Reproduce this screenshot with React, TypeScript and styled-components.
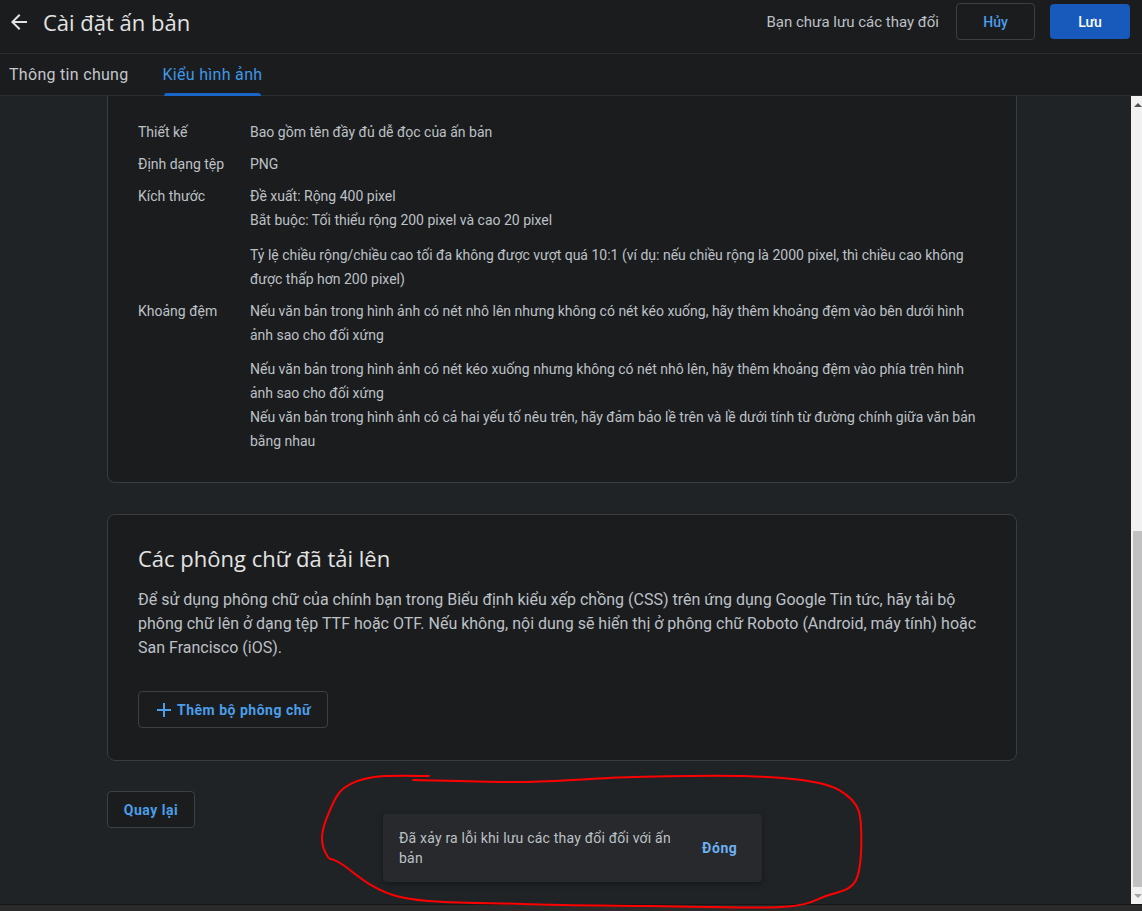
import React from "react";
import styled, { createGlobalStyle } from "styled-components";

const Global = createGlobalStyle`
  html, body { margin: 0; padding: 0; background: #1f2326; overflow: hidden; }
  * { box-sizing: border-box; }
`;

const SANS = `Roboto, "Noto Sans", "Liberation Sans", sans-serif`;
const DISPLAY = `"Open Sans", Roboto, "Liberation Sans", sans-serif`;

const Page = styled.div`
  position: relative;
  width: 1142px;
  height: 911px;
  display: flex;
  flex-direction: column;
  background: #1f2326;
  font-family: ${SANS};
  color: #bdc1c6;
  overflow: hidden;
`;

const Header = styled.header`
  height: 54px;
  flex: none;
  display: flex;
  align-items: center;
  padding: 3px 12px 13px 7px;
  background: #1b1c1e;
  border-bottom: 1px solid #2c2d30;
`;

const IconButton = styled.button`
  width: 24px;
  height: 24px;
  padding: 0;
  border: 0;
  background: none;
  color: #e3e3e3;
  display: flex;
  align-items: center;
  justify-content: center;
`;

const Title = styled.h1`
  margin: 0 0 0 12px;
  font-family: ${DISPLAY};
  font-weight: 400;
  font-size: 22px;
  color: #e3e3e3;
`;

const Spacer = styled.div`
  flex: 1;
`;

const Unsaved = styled.span`
  font-size: 15px;
  color: #bdc1c6;
  margin-right: 17px;
`;

const OutlineButton = styled.button<{ $w?: number; $h?: number }>`
  height: ${(p) => p.$h ?? 37}px;
  width: ${(p) => (p.$w ? `${p.$w}px` : "auto")};
  padding: 0 16px;
  border: 1px solid #3c4043;
  border-radius: 4px;
  background: #1b1c1e;
  color: #4a9eea;
  font-family: ${SANS};
  font-weight: 500;
  font-size: 14px;
  display: inline-flex;
  align-items: center;
  justify-content: center;
  gap: 1px;
`;

const PrimaryButton = styled.button`
  width: 80px;
  height: 35px;
  margin-left: 15px;
  border: 0;
  border-radius: 4px;
  background: #185abc;
  color: #ffffff;
  font-family: ${SANS};
  font-weight: 500;
  font-size: 14px;
`;

const Tabs = styled.nav`
  height: 42px;
  flex: none;
  display: flex;
  align-items: stretch;
  gap: 34px;
  padding-left: 9px;
  background: #1b1c1e;
  border-bottom: 1px solid #2c2d30;
`;

const Tab = styled.div<{ $active?: boolean }>`
  position: relative;
  display: flex;
  align-items: center;
  font-size: 16px;
  letter-spacing: 0.3px;
  color: ${(p) => (p.$active ? "#3f97e6" : "#c4c7cc")};
  &::after {
    content: "";
    display: ${(p) => (p.$active ? "block" : "none")};
    position: absolute;
    left: 1px;
    right: 1px;
    bottom: -1px;
    height: 3px;
    border-radius: 3px 3px 0 0;
    background: #1a66c8;
  }
`;

const Body = styled.div`
  flex: 1;
  display: flex;
  min-height: 0;
`;

const Scroll = styled.main`
  flex: 1;
  overflow: hidden;
`;

const Column = styled.div`
  width: 910px;
  margin-left: 107px;
  display: flex;
  flex-direction: column;
  align-items: flex-start;
`;

const Card = styled.section<{ $clipped?: boolean }>`
  width: 100%;
  background: #1b1c1e;
  border: 1px solid #3a3c3f;
  border-top: ${(p) => (p.$clipped ? "none" : "1px solid #3a3c3f")};
  border-radius: ${(p) => (p.$clipped ? "0 0 8px 8px" : "8px")};
  padding: ${(p) => (p.$clipped ? "24px 30px 29px" : "29px 30px 32px")};
  margin-top: ${(p) => (p.$clipped ? 0 : 31)}px;
`;

const SpecList = styled.dl`
  margin: 0;
  display: grid;
  grid-template-columns: 112px 1fr;
  row-gap: 8px;
  font-size: 14px;
  line-height: 24px;
`;

const SpecLabel = styled.dt`
  color: #bdc1c6;
`;

const SpecValue = styled.dd`
  margin: 0;
  color: #bdc1c6;
  padding-right: 6px;
`;

const Para = styled.p<{ $gap?: number }>`
  margin: ${(p) => p.$gap ?? 0}px 0 0;
`;

const CardTitle = styled.h2`
  margin: 0;
  font-family: ${DISPLAY};
  font-weight: 400;
  font-size: 22px;
  line-height: 28px;
  color: #e3e3e3;
`;

const CardText = styled.p`
  margin: 16px 0 0;
  font-size: 16px;
  line-height: 24px;
  color: #bdc1c6;
`;

const AddButton = styled(OutlineButton)`
  margin-top: 31px;
  padding: 0 16px 0 13px;
  font-weight: 700;
  letter-spacing: 0.5px;
`;

const BackLink = styled(OutlineButton)`
  margin-top: 30px;
  width: 88px;
  padding: 0;
  font-weight: 700;
  letter-spacing: 0.5px;
`;

const Scrollbar = styled.div`
  width: 11px;
  flex: none;
  background: #f1f1f1;
  display: flex;
  flex-direction: column;
  align-items: flex-end;
`;

const ScrollArrow = styled.div<{ $down?: boolean }>`
  width: 9px;
  height: 17px;
  flex: none;
  display: flex;
  align-items: center;
  justify-content: center;
  &::before {
    content: "";
    width: 0;
    height: 0;
    border-left: 4px solid transparent;
    border-right: 4px solid transparent;
    ${(p) =>
      p.$down
        ? "border-top: 4px solid #a3a3a3;"
        : "border-bottom: 4px solid #505050;"}
  }
`;

const Track = styled.div`
  flex: 1;
  width: 9px;
  display: flex;
  flex-direction: column;
  justify-content: flex-end;
`;

const Thumb = styled.div`
  height: 356px;
  background: #c1c1c1;
`;

const BottomBar = styled.div`
  height: 7px;
  flex: none;
  background: #2b2b2b;
  border-top: 1px solid #151617;
`;

const Toast = styled.div`
  position: absolute;
  left: 383px;
  bottom: 29px;
  width: 379px;
  height: 68px;
  display: flex;
  align-items: center;
  padding: 0 16px;
  background: #27292c;
  border-radius: 4px;
  box-shadow: 0 2px 6px rgba(0, 0, 0, 0.35);
`;

const ToastMessage = styled.div`
  width: 287px;
  font-size: 14px;
  line-height: 20px;
  letter-spacing: 0.2px;
  color: #bdc1c6;
`;

const ToastAction = styled.button`
  margin-left: 8px;
  padding: 0 8px;
  border: 0;
  background: none;
  color: #6cb0f2;
  font-family: ${SANS};
  font-weight: 700;
  font-size: 14px;
  letter-spacing: 0.6px;
`;

const Annotation = styled.svg`
  position: absolute;
  left: 0;
  top: 0;
  pointer-events: none;
`;

const scribble: [number, number][] = [
  [429, 776], [374, 777], [344, 788], [330, 810], [322, 837], [328, 857],
  [340, 863], [400, 897], [522, 904], [650, 906], [781, 907], [826, 896],
  [856, 880], [861, 827], [852, 800], [819, 783], [744, 776], [633, 777],
  [522, 782], [413, 780],
];

function smoothPath(pts: [number, number][]) {
  let d = `M${pts[0][0]} ${pts[0][1]}`;
  for (let i = 0; i < pts.length - 1; i++) {
    const p0 = pts[i - 1] ?? pts[i];
    const p1 = pts[i];
    const p2 = pts[i + 1];
    const p3 = pts[i + 2] ?? p2;
    const c1x = p1[0] + (p2[0] - p0[0]) / 6;
    const c1y = p1[1] + (p2[1] - p0[1]) / 6;
    const c2x = p2[0] - (p3[0] - p1[0]) / 6;
    const c2y = p2[1] - (p3[1] - p1[1]) / 6;
    d += ` C${c1x.toFixed(1)} ${c1y.toFixed(1)} ${c2x.toFixed(1)} ${c2y.toFixed(1)} ${p2[0]} ${p2[1]}`;
  }
  return d;
}

const ArrowBack = () => (
  <svg width="24" height="24" viewBox="0 0 24 24" fill="currentColor">
    <path d="M20 11H7.83l5.59-5.59L12 4l-8 8 8 8 1.41-1.41L7.83 13H20v-2z" />
  </svg>
);

const PlusIcon = () => (
  <svg width="24" height="24" viewBox="0 0 24 24" fill="currentColor">
    <path d="M19 13h-6v6h-2v-6H5v-2h6V5h2v6h6v2z" />
  </svg>
);

export default function App() {
  return (
    <Page>
      <Global />
      <Header>
        <IconButton aria-label="Quay lại">
          <ArrowBack />
        </IconButton>
        <Title>Cài đặt ấn bản</Title>
        <Spacer />
        <Unsaved>Bạn chưa lưu các thay đổi</Unsaved>
        <OutlineButton $w={79}>Hủy</OutlineButton>
        <PrimaryButton>Lưu</PrimaryButton>
      </Header>
      <Tabs>
        <Tab>Thông tin chung</Tab>
        <Tab $active>Kiểu hình ảnh</Tab>
      </Tabs>
      <Body>
        <Scroll>
          <Column>
            <Card $clipped>
              <SpecList>
                <SpecLabel>Thiết kế</SpecLabel>
                <SpecValue>Bao gồm tên đầy đủ dễ đọc của ấn bản</SpecValue>
                <SpecLabel>Định dạng tệp</SpecLabel>
                <SpecValue>PNG</SpecValue>
                <SpecLabel>Kích thước</SpecLabel>
                <SpecValue>
                  <Para>
                    Đề xuất: Rộng 400 pixel
                    <br />
                    Bắt buộc: Tối thiểu rộng 200 pixel và cao 20 pixel
                  </Para>
                  <Para $gap={11}>
                    Tỷ lệ chiều rộng/chiều cao tối đa không được vượt quá 10:1 (ví dụ: nếu chiều rộng là 2000 pixel, thì chiều cao không được thấp hơn 200 pixel)
                  </Para>
                </SpecValue>
                <SpecLabel>Khoảng đệm</SpecLabel>
                <SpecValue>
                  <Para>
                    Nếu văn bản trong hình ảnh có nét nhô lên nhưng không có nét kéo xuống, hãy thêm khoảng đệm vào bên dưới hình ảnh sao cho đối xứng
                  </Para>
                  <Para $gap={10}>
                    Nếu văn bản trong hình ảnh có nét kéo xuống nhưng không có nét nhô lên, hãy thêm khoảng đệm vào phía trên hình ảnh sao cho đối xứng
                    <br />
                    Nếu văn bản trong hình ảnh có cả hai yếu tố nêu trên, hãy đảm bảo lề trên và lề dưới tính từ đường chính giữa văn bản bằng nhau
                  </Para>
                </SpecValue>
              </SpecList>
            </Card>
            <Card>
              <CardTitle>Các phông chữ đã tải lên</CardTitle>
              <CardText>
                Để sử dụng phông chữ của chính bạn trong Biểu định kiểu xếp chồng (CSS) trên ứng dụng Google Tin tức, hãy tải bộ phông chữ lên ở dạng tệp TTF hoặc OTF. Nếu không, nội dung sẽ hiển thị ở phông chữ Roboto (Android, máy tính) hoặc San Francisco (iOS).
              </CardText>
              <AddButton>
                <PlusIcon />
                Thêm bộ phông chữ
              </AddButton>
            </Card>
            <BackLink>Quay lại</BackLink>
          </Column>
        </Scroll>
        <Scrollbar>
          <ScrollArrow />
          <Track>
            <Thumb />
          </Track>
          <ScrollArrow $down />
        </Scrollbar>
      </Body>
      <BottomBar />
      <Toast role="status">
        <ToastMessage>Đã xảy ra lỗi khi lưu các thay đổi đối với ấn bản</ToastMessage>
        <ToastAction>Đóng</ToastAction>
      </Toast>
      <Annotation width="1142" height="911" viewBox="0 0 1142 911">
        <path d={smoothPath(scribble)} fill="none" stroke="#ff0000" strokeWidth="2" strokeLinecap="round" strokeLinejoin="round" />
      </Annotation>
    </Page>
  );
}
